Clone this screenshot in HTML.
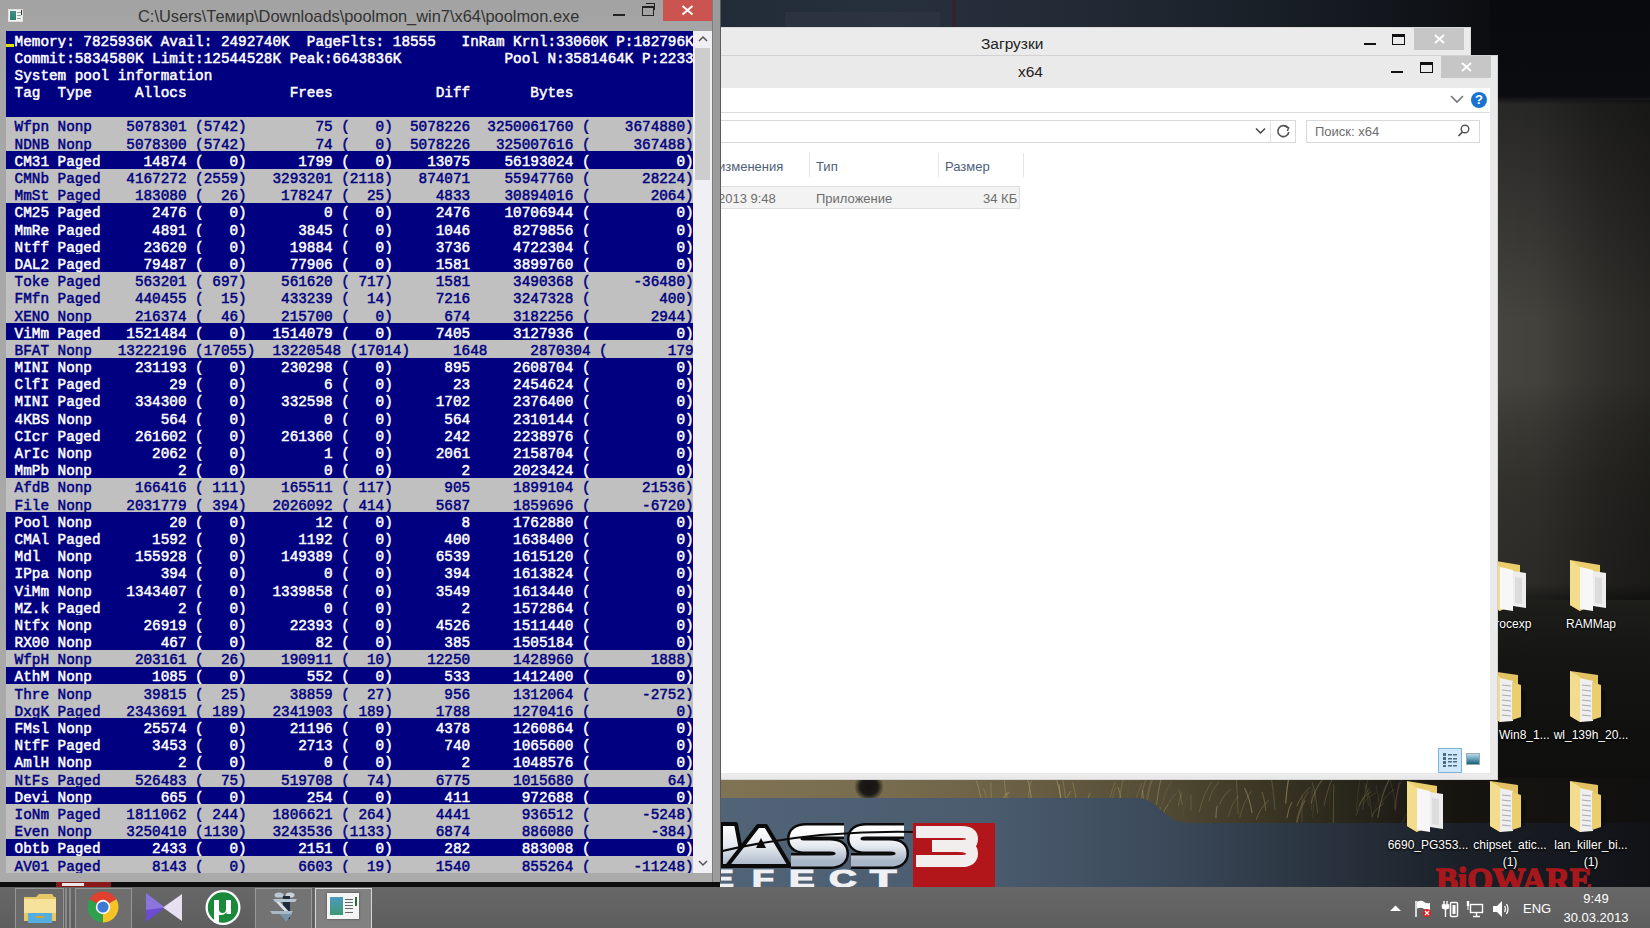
<!DOCTYPE html>
<html><head><meta charset="utf-8">
<style>
*{margin:0;padding:0;box-sizing:border-box}
html,body{width:1650px;height:928px;overflow:hidden;background:#15181c;font-family:"Liberation Sans",sans-serif}
.a{position:absolute}
.ttl{font-size:15px;color:#222;white-space:nowrap}
.r{position:absolute;left:0;width:687px;height:17.1875px;overflow:visible}
.r span{position:absolute;left:0;top:2.5px;white-space:pre;font-family:"Liberation Mono",monospace;font-weight:normal;-webkit-text-stroke:0.5px currentColor;font-size:14.5px;line-height:17px;transform:scaleX(0.9878);transform-origin:0 0}
.h,.b{background:#000080;color:#fff}
.g{background:#c0c0c0;color:#000080}
.lbl{color:#fff;font-size:12px;line-height:17px;white-space:nowrap;text-align:center;width:90px;text-shadow:0 0 2px #000,0 1px 2px #000}
</style></head><body>
<!-- ===== WALLPAPER ===== -->
<div class="a" style="left:0;top:0;width:1650px;height:928px;background:#14171b"></div>
<!-- top grunge strip -->
<div class="a" style="left:700px;top:0;width:950px;height:60px;background:linear-gradient(90deg,#222b38 0%,#26303c 20%,#222a35 40%,#1c222b 55%,#151a20 68%,#0c0e12 82%,#08090b 100%)"></div>
<div class="a" style="left:785px;top:12px;width:155px;height:16px;background:#2f3743;opacity:0.6"></div>
<div class="a" style="left:952px;top:0;width:4px;height:28px;background:#3a2024;opacity:0.7"></div>
<!-- right strip fog -->
<div class="a" style="left:1490px;top:0;width:160px;height:887px;background:linear-gradient(180deg,#090a0d 0px,#0b0c10 96px,#282826 104px,#302f2d 160px,#3c3b37 250px,#47453f 320px,#47453f 380px,#3c3b36 420px,#33322d 480px,#2f2e2a 540px,#2d2c28 584px,#1e1e1b 597px,#151513 660px,#10100f 740px,#0e0e0d 800px,#0d0d0d 887px)"></div>
<div class="a" style="left:1490px;top:100px;width:160px;height:500px;background:linear-gradient(90deg,rgba(0,0,0,0) 0%,rgba(0,0,0,0.05) 30%,rgba(0,0,0,0.3) 70%,rgba(0,0,0,0.42) 100%)"></div>
<!-- bottom band: grass -->
<div class="a" style="left:700px;top:778px;width:950px;height:50px;background:linear-gradient(90deg,#807455 0%,#786c4e 20%,#685e43 35%,#554d37 47%,#3e3926 58%,#2d2a1d 66%,#201e17 73%,#15140f 80%,#111010 100%)"></div>
<svg class="a" style="left:700px;top:770px" width="950" height="60" viewBox="0 0 950 60"><path d="M384.7 44.1 Q386.3 31.5 390.0 23.1" stroke="#9c8e60" stroke-width="1.0" fill="none" opacity="0.60"/><path d="M679.9 42.2 Q678.7 26.3 676.1 15.7" stroke="#6e6242" stroke-width="0.9" fill="none" opacity="0.32"/><path d="M658.8 36.0 Q662.6 27.3 671.2 21.5" stroke="#9c8e60" stroke-width="1.1" fill="none" opacity="0.25"/><path d="M308.2 49.7 Q307.8 33.1 306.8 22.0" stroke="#b3a470" stroke-width="0.9" fill="none" opacity="0.36"/><path d="M596.3 52.8 Q600.0 34.0 608.5 21.4" stroke="#6e6242" stroke-width="1.3" fill="none" opacity="0.51"/><path d="M339.0 39.5 Q339.9 32.9 341.9 28.4" stroke="#6e6242" stroke-width="1.1" fill="none" opacity="0.45"/><path d="M656.3 40.9 Q657.7 19.9 660.9 5.9" stroke="#6e6242" stroke-width="1.0" fill="none" opacity="0.28"/><path d="M677.8 47.7 Q681.1 25.0 688.7 9.9" stroke="#8a7c52" stroke-width="1.1" fill="none" opacity="0.37"/><path d="M423.6 44.1 Q421.9 27.8 417.9 16.9" stroke="#b3a470" stroke-width="0.8" fill="none" opacity="0.61"/><path d="M307.9 52.2 Q306.1 28.4 301.9 12.5" stroke="#6e6242" stroke-width="1.2" fill="none" opacity="0.67"/><path d="M288.9 41.1 Q287.2 27.6 283.5 18.6" stroke="#9c8e60" stroke-width="0.9" fill="none" opacity="0.59"/><path d="M538.0 44.3 Q537.4 21.7 536.1 6.7" stroke="#9c8e60" stroke-width="0.8" fill="none" opacity="0.44"/><path d="M313.9 45.6 Q312.8 39.0 310.2 34.7" stroke="#b3a470" stroke-width="0.7" fill="none" opacity="0.51"/><path d="M298.7 52.6 Q302.6 40.9 311.8 33.1" stroke="#6e6242" stroke-width="0.9" fill="none" opacity="0.71"/><path d="M662.8 40.0 Q664.8 18.4 669.7 4.0" stroke="#b3a470" stroke-width="0.9" fill="none" opacity="0.20"/><path d="M596.9 36.2 Q601.0 24.8 610.4 17.1" stroke="#b3a470" stroke-width="0.6" fill="none" opacity="0.56"/><path d="M462.7 45.1 Q464.4 38.7 468.2 34.5" stroke="#9c8e60" stroke-width="1.0" fill="none" opacity="0.60"/><path d="M426.3 39.2 Q427.9 16.7 431.7 1.7" stroke="#6e6242" stroke-width="0.6" fill="none" opacity="0.46"/><path d="M306.7 47.6 Q305.9 24.2 304.2 8.7" stroke="#b3a470" stroke-width="0.7" fill="none" opacity="0.53"/><path d="M361.5 49.7 Q360.9 28.5 359.3 14.4" stroke="#9c8e60" stroke-width="1.1" fill="none" opacity="0.66"/><path d="M291.8 44.8 Q291.5 25.6 290.7 12.7" stroke="#b3a470" stroke-width="0.8" fill="none" opacity="0.44"/><path d="M362.5 41.3 Q360.7 22.8 356.7 10.4" stroke="#b3a470" stroke-width="1.1" fill="none" opacity="0.48"/><path d="M378.8 51.1 Q376.9 27.8 372.5 12.2" stroke="#8a7c52" stroke-width="1.2" fill="none" opacity="0.65"/><path d="M478.5 35.9 Q479.6 27.7 482.1 22.2" stroke="#8a7c52" stroke-width="1.2" fill="none" opacity="0.43"/><path d="M429.6 51.5 Q431.3 44.0 435.3 39.0" stroke="#6e6242" stroke-width="0.8" fill="none" opacity="0.59"/><path d="M629.3 37.1 Q629.7 24.8 630.5 16.7" stroke="#6e6242" stroke-width="0.6" fill="none" opacity="0.26"/><path d="M461.8 35.2 Q464.9 20.6 472.2 10.9" stroke="#6e6242" stroke-width="1.0" fill="none" opacity="0.60"/><path d="M713.7 48.6 Q714.3 42.1 715.8 37.7" stroke="#b3a470" stroke-width="1.0" fill="none" opacity="0.33"/><path d="M671.5 52.4 Q675.5 31.0 684.8 16.7" stroke="#8a7c52" stroke-width="0.6" fill="none" opacity="0.20"/><path d="M677.6 48.0 Q681.1 25.4 689.3 10.3" stroke="#9c8e60" stroke-width="0.6" fill="none" opacity="0.35"/><path d="M607.9 34.5 Q609.9 23.1 614.5 15.5" stroke="#6e6242" stroke-width="0.6" fill="none" opacity="0.28"/><path d="M681.8 33.0 Q685.8 24.7 695.1 19.2" stroke="#9c8e60" stroke-width="0.8" fill="none" opacity="0.28"/><path d="M366.8 43.9 Q365.6 23.2 362.6 9.4" stroke="#8a7c52" stroke-width="1.2" fill="none" opacity="0.67"/><path d="M283.3 46.3 Q281.2 24.8 276.4 10.5" stroke="#b3a470" stroke-width="1.0" fill="none" opacity="0.46"/><path d="M508.7 31.3 Q511.7 19.5 518.7 11.6" stroke="#8a7c52" stroke-width="0.6" fill="none" opacity="0.69"/><path d="M301.9 42.6 Q304.2 36.0 309.6 31.6" stroke="#6e6242" stroke-width="0.8" fill="none" opacity="0.56"/><path d="M418.4 39.1 Q419.9 21.5 423.3 9.7" stroke="#8a7c52" stroke-width="1.3" fill="none" opacity="0.49"/><path d="M468.6 33.3 Q471.0 27.3 476.5 23.2" stroke="#8a7c52" stroke-width="0.6" fill="none" opacity="0.67"/><path d="M482.8 46.9 Q484.6 31.2 488.8 20.7" stroke="#6e6242" stroke-width="0.6" fill="none" opacity="0.37"/><path d="M556.1 49.8 Q559.9 38.1 569.0 30.3" stroke="#9c8e60" stroke-width="0.8" fill="none" opacity="0.52"/><path d="M515.8 48.1 Q516.2 40.8 517.1 35.9" stroke="#9c8e60" stroke-width="1.3" fill="none" opacity="0.52"/><path d="M444.7 53.3 Q444.0 33.1 442.4 19.6" stroke="#9c8e60" stroke-width="1.3" fill="none" opacity="0.54"/><path d="M601.9 52.1 Q602.0 36.6 602.2 26.2" stroke="#b3a470" stroke-width="1.0" fill="none" opacity="0.20"/><path d="M325.4 45.3 Q323.9 39.2 320.5 35.1" stroke="#9c8e60" stroke-width="1.0" fill="none" opacity="0.66"/><path d="M528.3 47.1 Q531.3 34.4 538.3 25.9" stroke="#9c8e60" stroke-width="0.6" fill="none" opacity="0.49"/><path d="M330.6 42.5 Q330.1 24.0 328.9 11.6" stroke="#9c8e60" stroke-width="0.6" fill="none" opacity="0.47"/><path d="M617.7 43.3 Q616.0 24.4 612.0 11.8" stroke="#9c8e60" stroke-width="1.0" fill="none" opacity="0.32"/><path d="M662.5 34.7 Q666.7 27.3 676.5 22.4" stroke="#6e6242" stroke-width="1.0" fill="none" opacity="0.30"/><path d="M611.6 40.2 Q611.8 27.6 612.3 19.2" stroke="#6e6242" stroke-width="1.3" fill="none" opacity="0.25"/><path d="M445.1 36.1 Q448.3 13.4 455.7 -1.8" stroke="#6e6242" stroke-width="1.1" fill="none" opacity="0.74"/><path d="M612.7 47.5 Q613.5 32.2 615.3 22.0" stroke="#8a7c52" stroke-width="0.7" fill="none" opacity="0.30"/><path d="M499.1 42.6 Q503.0 24.0 512.0 11.6" stroke="#8a7c52" stroke-width="0.7" fill="none" opacity="0.58"/><path d="M610.9 33.8 Q614.7 18.5 623.5 8.3" stroke="#b3a470" stroke-width="1.1" fill="none" opacity="0.35"/><path d="M656.3 45.5 Q660.4 29.0 670.0 17.9" stroke="#b3a470" stroke-width="0.6" fill="none" opacity="0.35"/><path d="M491.0 40.0 Q491.0 30.9 490.9 24.8" stroke="#8a7c52" stroke-width="0.9" fill="none" opacity="0.48"/><path d="M586.9 48.2 Q588.4 38.5 591.7 32.1" stroke="#9c8e60" stroke-width="0.9" fill="none" opacity="0.71"/><path d="M597.1 52.3 Q599.6 39.1 605.3 30.3" stroke="#6e6242" stroke-width="1.2" fill="none" opacity="0.73"/><path d="M672.0 46.9 Q670.1 26.9 665.6 13.5" stroke="#b3a470" stroke-width="0.8" fill="none" opacity="0.22"/><path d="M363.4 36.7 Q365.7 27.4 370.9 21.1" stroke="#b3a470" stroke-width="0.7" fill="none" opacity="0.69"/><path d="M299.8 34.8 Q302.7 27.1 309.4 22.0" stroke="#b3a470" stroke-width="1.2" fill="none" opacity="0.40"/><path d="M408.4 39.3 Q410.4 22.8 415.2 11.9" stroke="#b3a470" stroke-width="0.8" fill="none" opacity="0.35"/><path d="M447.1 32.0 Q449.6 14.4 455.4 2.7" stroke="#8a7c52" stroke-width="1.0" fill="none" opacity="0.55"/><path d="M332.4 37.1 Q330.8 19.2 326.9 7.2" stroke="#b3a470" stroke-width="0.7" fill="none" opacity="0.70"/><path d="M694.2 39.7 Q696.8 19.8 702.8 6.6" stroke="#b3a470" stroke-width="0.7" fill="none" opacity="0.23"/><path d="M695.6 38.8 Q696.6 22.6 699.1 11.8" stroke="#b3a470" stroke-width="0.6" fill="none" opacity="0.31"/><path d="M409.5 48.9 Q411.4 29.6 415.8 16.7" stroke="#8a7c52" stroke-width="0.7" fill="none" opacity="0.64"/><path d="M671.6 47.0 Q675.3 38.8 684.1 33.3" stroke="#b3a470" stroke-width="1.1" fill="none" opacity="0.20"/><path d="M565.8 40.9 Q564.7 29.5 561.9 21.9" stroke="#8a7c52" stroke-width="1.1" fill="none" opacity="0.54"/><path d="M327.3 34.7 Q328.7 18.7 331.9 8.1" stroke="#9c8e60" stroke-width="0.8" fill="none" opacity="0.51"/><path d="M448.7 52.7 Q449.6 45.9 451.8 41.4" stroke="#b3a470" stroke-width="1.2" fill="none" opacity="0.45"/><path d="M695.8 41.7 Q693.9 21.1 689.3 7.4" stroke="#9c8e60" stroke-width="0.7" fill="none" opacity="0.27"/><path d="M539.7 47.7 Q543.3 31.6 551.7 20.8" stroke="#8a7c52" stroke-width="1.0" fill="none" opacity="0.39"/><path d="M574.9 40.2 Q573.3 16.5 569.7 0.7" stroke="#6e6242" stroke-width="1.2" fill="none" opacity="0.59"/><path d="M519.7 34.4 Q523.0 25.2 530.8 19.1" stroke="#b3a470" stroke-width="0.6" fill="none" opacity="0.50"/><path d="M633.4 53.2 Q633.5 30.1 633.8 14.7" stroke="#b3a470" stroke-width="1.0" fill="none" opacity="0.29"/><path d="M709.9 47.9 Q713.1 36.5 720.8 28.9" stroke="#8a7c52" stroke-width="1.1" fill="none" opacity="0.27"/><path d="M281.0 50.0 Q281.9 32.1 283.9 20.2" stroke="#6e6242" stroke-width="0.7" fill="none" opacity="0.56"/><path d="M624.1 35.5 Q627.9 14.9 636.5 1.1" stroke="#9c8e60" stroke-width="1.0" fill="none" opacity="0.36"/><path d="M702.0 53.2 Q704.8 44.8 711.4 39.1" stroke="#9c8e60" stroke-width="0.6" fill="none" opacity="0.30"/><path d="M552.1 43.2 Q549.8 28.2 544.5 18.2" stroke="#b3a470" stroke-width="1.2" fill="none" opacity="0.49"/><path d="M585.7 33.5 Q587.2 12.0 590.9 -2.3" stroke="#9c8e60" stroke-width="1.1" fill="none" opacity="0.72"/><path d="M431.2 51.0 Q434.5 28.2 442.1 13.0" stroke="#8a7c52" stroke-width="0.9" fill="none" opacity="0.52"/><path d="M328.0 31.1 Q326.9 23.7 324.4 18.8" stroke="#6e6242" stroke-width="0.9" fill="none" opacity="0.41"/><path d="M309.9 52.1 Q310.7 42.4 312.7 35.9" stroke="#6e6242" stroke-width="1.1" fill="none" opacity="0.36"/><path d="M456.6 34.7 Q459.0 12.5 464.5 -2.3" stroke="#b3a470" stroke-width="0.9" fill="none" opacity="0.50"/><path d="M439.1 40.4 Q442.0 17.0 448.8 1.4" stroke="#b3a470" stroke-width="0.7" fill="none" opacity="0.45"/><path d="M482.4 35.1 Q481.1 25.3 478.2 18.8" stroke="#8a7c52" stroke-width="1.0" fill="none" opacity="0.51"/><path d="M341.3 45.8 Q340.1 31.9 337.3 22.5" stroke="#6e6242" stroke-width="0.9" fill="none" opacity="0.69"/><path d="M459.4 48.3 Q459.7 41.4 460.3 36.8" stroke="#9c8e60" stroke-width="1.2" fill="none" opacity="0.51"/><path d="M668.6 36.3 Q667.4 23.3 664.7 14.6" stroke="#9c8e60" stroke-width="0.8" fill="none" opacity="0.24"/></svg>
<div class="a" style="left:855px;top:778px;width:28px;height:22px;background:radial-gradient(ellipse at 50% 40%,#141311 0%,#1c1b17 45%,rgba(40,38,30,0) 75%)"></div>
<!-- blue-gray panel -->
<svg class="a" style="left:700px;top:770px" width="950" height="117" viewBox="0 0 950 117">
  <defs><linearGradient id="pg" x1="0" x2="1" y1="0" y2="0">
    <stop offset="0" stop-color="#526477"/><stop offset="0.3" stop-color="#4b5c6f"/><stop offset="0.5" stop-color="#3a4858"/><stop offset="0.65" stop-color="#2a3440"/><stop offset="0.8" stop-color="#1b2028"/><stop offset="1" stop-color="#101216"/></linearGradient></defs>
  <path d="M0 28 L438 28 Q448 28 456 36 L474 50 Q482 53 492 53 L950 53 L950 117 L0 117 Z" fill="url(#pg)"/>
</svg>
<!-- Mass Effect logo -->
<svg class="a" style="left:700px;top:770px" width="300" height="117" viewBox="0 0 300 117">
  <defs><linearGradient id="sil" x1="0" x2="0" y1="0" y2="1"><stop offset="0" stop-color="#ffffff"/><stop offset="0.5" stop-color="#e6eaf0"/><stop offset="1" stop-color="#a9b6c8"/></linearGradient></defs>
  <g stroke="#0b0b0b" stroke-width="4" stroke-linejoin="round">
    <polygon points="21,54 36,54 44,96 21,96" fill="url(#sil)"/>
    <polygon points="27,96 58,56 66,56 90,96" fill="url(#sil)"/>
  </g>
  <g fill="none" stroke-linecap="butt">
    <path d="M144 61 L106 61 Q95 61 95 69 Q95 76 106 76 L130 76 Q141 76 141 83.5 Q141 91 130 91 L91 91" stroke="#0b0b0b" stroke-width="16"/>
    <path d="M204 61 L166 61 Q155 61 155 69 Q155 76 166 76 L190 76 Q201 76 201 83.5 Q201 91 190 91 L151 91" stroke="#0b0b0b" stroke-width="16"/>
    <path d="M144 61 L106 61 Q95 61 95 69 Q95 76 106 76 L130 76 Q141 76 141 83.5 Q141 91 130 91 L91 91" stroke="url(#sil)" stroke-width="11"/>
    <path d="M204 61 L166 61 Q155 61 155 69 Q155 76 166 76 L190 76 Q201 76 201 83.5 Q201 91 190 91 L151 91" stroke="url(#sil)" stroke-width="11"/>
  </g>
  <path d="M18 82 Q110 60 215 62" stroke="#0b0b0b" stroke-width="2" fill="none"/>
  <polygon points="61,68 66,78 56,78" fill="#0b0b0b"/>
  <rect x="213" y="53" width="82" height="64" fill="#b3161a"/>
  <path d="M216 62 L262 62 Q272 62 272 69 Q272 76 262 76 L232 76 M258 76 Q272 76 272 83.5 Q272 91 262 91 L216 91" stroke="#f2eeee" stroke-width="12" fill="none"/>
  <g fill="#eef0f4" stroke="#eef0f4" stroke-width="1.2" font-family="Liberation Sans" font-weight="bold" font-size="24">
    <text transform="translate(9,117) scale(1.55,1)">E</text>
    <text transform="translate(52,117) scale(1.5,1)">F</text>
    <text transform="translate(89,117) scale(1.6,1)">E</text>
    <text transform="translate(129,117) scale(1.6,1)">C</text>
    <text transform="translate(170,117) scale(1.8,1)">T</text>
  </g>
</svg>
<!-- BioWare -->
<div class="a" style="left:1436px;top:862px;width:165px;height:25px;overflow:hidden">
  <div style="position:absolute;left:0;top:1px;font:bold 34px/34px 'Liberation Serif',serif;color:#a8171b;-webkit-text-stroke:1.6px #a8171b;white-space:nowrap;transform:scaleX(0.97);transform-origin:0 0">BiOWARE</div>
</div>

<!-- ===== DESKTOP ICONS ===== -->
<svg class="a" style="left:0;top:0" width="0" height="0"><defs>
<g id="fold">
  <polygon points="2,1 32,6 32,42 12,52 2,46" fill="#eccd6e"/>
  <polygon points="2,1 12,8 12,52 2,46" fill="#f3dc8c"/>
  <polygon points="12,8 25,11 25,52 12,50" fill="#f7f7f7"/>
  <polygon points="25,12 38,14 38,49 25,47" fill="#ededed"/>
  <polygon points="27,18 34,19 34,45 27,44" fill="#dcdcdc"/>
</g>
<g id="fold2">
  <polygon points="2,1 30,5 30,44 12,52 2,46" fill="#e3c263"/>
  <polygon points="2,1 12,7 12,52 2,46" fill="#f4dc8e"/>
  <polygon points="12,8 25,11 25,51 12,52" fill="#efefef"/>
  <path d="M14 15 L23 16 M14 20 L23 21 M14 25 L23 26 M14 30 L23 31 M14 35 L23 36 M14 40 L23 41 M14 45 L23 46" stroke="#a9a9a9" stroke-width="1.2"/>
  <polygon points="24,12 33,15 33,47 24,50" fill="#ecce70"/>
  <polygon points="33,18 38,22 37,46 33,47" fill="#000" opacity="0.25"/>
</g></defs></svg>
<svg class="a" style="left:1568px;top:559px" width="40" height="53"><use href="#fold"/></svg>
<svg class="a" style="left:1568px;top:670px" width="40" height="53"><use href="#fold2"/></svg>
<svg class="a" style="left:1568px;top:780px" width="40" height="53"><use href="#fold2"/></svg>
<svg class="a" style="left:1488px;top:559px" width="40" height="53"><use href="#fold"/></svg>
<svg class="a" style="left:1488px;top:670px" width="40" height="53"><use href="#fold2"/></svg>
<svg class="a" style="left:1488px;top:780px" width="40" height="53"><use href="#fold2"/></svg>
<svg class="a" style="left:1405px;top:780px" width="40" height="53"><use href="#fold"/></svg>
<div class="a lbl" style="left:1546px;top:616px">RAMMap</div>
<div class="a lbl" style="left:1546px;top:727px">wl_139h_20...</div>
<div class="a lbl" style="left:1546px;top:837px">lan_killer_bi...<br>(1)</div>
<div class="a lbl" style="left:1465px;top:616px">procexp</div>
<div class="a lbl" style="left:1499px;top:727px;text-align:left">Win8_1...</div>
<div class="a lbl" style="left:1465px;top:837px">chipset_atic...<br>(1)</div>
<div class="a lbl" style="left:1383px;top:837px">6690_PG353...</div>


<!-- ===== ZAGRUZKI WINDOW ===== -->
<div class="a" style="left:700px;top:27px;width:771px;height:40px;background:#ebebeb;border:1px solid #d9d9d9"></div>
<div class="a ttl" style="left:981px;top:35px;font-size:15.5px">Загрузки</div>
<div class="a" style="left:1364px;top:43px;width:12px;height:2px;background:#111"></div>
<div class="a" style="left:1392px;top:34px;width:13px;height:11px;border:1px solid #111;border-top-width:3px"></div>
<div class="a" style="left:1414px;top:28px;width:50px;height:22px;background:#c6c6c6"></div>
<svg class="a" style="left:1434px;top:34px" width="11" height="10"><path d="M1 1 L10 9 M10 1 L1 9" stroke="#fff" stroke-width="1.9"/></svg>

<!-- ===== X64 WINDOW ===== -->
<div class="a" style="left:700px;top:55px;width:798px;height:725px;background:#eaeaea;border:1px solid #d2d2d2"></div>
<div class="a" style="left:700px;top:88px;width:790px;height:685px;background:#fff"></div>
<div class="a ttl" style="left:1018px;top:63px;font-size:15.5px">x64</div>
<div class="a" style="left:1391px;top:71px;width:12px;height:2px;background:#111"></div>
<div class="a" style="left:1420px;top:62px;width:13px;height:11px;border:1px solid #111;border-top-width:3px"></div>
<div class="a" style="left:1441px;top:56px;width:50px;height:22px;background:#c6c6c6"></div>
<svg class="a" style="left:1461px;top:62px" width="11" height="10"><path d="M1 1 L10 9 M10 1 L1 9" stroke="#fff" stroke-width="1.9"/></svg>
<!-- ribbon -->
<div class="a" style="left:700px;top:112px;width:790px;height:1px;background:#dadbdc"></div>
<svg class="a" style="left:1450px;top:95px" width="14" height="9"><path d="M1 1 L7 7 L13 1" stroke="#777" stroke-width="1.6" fill="none"/></svg>
<div class="a" style="left:1471px;top:92px;width:16px;height:16px;border-radius:50%;background:#1a73d0;color:#fff;font:bold 13px/16px 'Liberation Sans',sans-serif;text-align:center">?</div>
<!-- address bar -->
<div class="a" style="left:700px;top:120px;width:596px;height:23px;border:1px solid #d9d9d9;background:#fff"></div>
<div class="a" style="left:1270px;top:121px;width:1px;height:21px;background:#e0e0e0"></div>
<svg class="a" style="left:1255px;top:127px" width="11" height="8"><path d="M1 1.5 L5.5 6 L10 1.5" stroke="#444" stroke-width="1.5" fill="none"/></svg>
<svg class="a" style="left:1275px;top:123px" width="17" height="17"><path d="M12.5 4.5 A5.5 5.5 0 1 0 13.8 9" stroke="#555" stroke-width="1.6" fill="none"/><path d="M10 2.5 L13.6 4.8 L12.4 8" stroke="#555" stroke-width="1.5" fill="none"/></svg>
<div class="a" style="left:1306px;top:120px;width:174px;height:23px;border:1px solid #d9d9d9;background:#fff"></div>
<div class="a" style="left:1315px;top:124px;font-size:13px;color:#6d6d6d;white-space:nowrap">Поиск: x64</div>
<svg class="a" style="left:1457px;top:124px" width="13" height="14"><circle cx="8" cy="5" r="3.8" stroke="#555" stroke-width="1.4" fill="none"/><path d="M5.5 7.8 L1.5 12" stroke="#555" stroke-width="1.8"/></svg>
<!-- column headers -->
<div class="a" style="left:718px;top:159px;font-size:13px;color:#4c607a;white-space:nowrap">изменения</div>
<div class="a" style="left:809px;top:153px;width:1px;height:24px;background:#e5e5e5"></div>
<div class="a" style="left:816px;top:159px;font-size:13px;color:#4c607a">Тип</div>
<div class="a" style="left:938px;top:153px;width:1px;height:24px;background:#e5e5e5"></div>
<div class="a" style="left:945px;top:159px;font-size:13px;color:#4c607a">Размер</div>
<div class="a" style="left:1023px;top:153px;width:1px;height:24px;background:#e5e5e5"></div>
<!-- file row -->
<div class="a" style="left:700px;top:186px;width:320px;height:23px;background:#f3f3f3;border:1px solid #dedede"></div>
<div class="a" style="left:718px;top:191px;font-size:13px;color:#6d6d6d;white-space:nowrap">2013 9:48</div>
<div class="a" style="left:816px;top:191px;font-size:13px;color:#6d6d6d">Приложение</div>
<div class="a" style="left:983px;top:191px;font-size:13px;color:#6d6d6d">34 КБ</div>
<!-- view buttons -->
<div class="a" style="left:1438px;top:748px;width:24px;height:25px;background:#cfe8fb;border:1px solid #7db3d9"></div>
<svg class="a" style="left:1440px;top:751px" width="20" height="18"><g fill="#4b6a80"><rect x="3" y="2" width="3" height="3"/><rect x="3" y="6" width="3" height="3"/><rect x="3" y="10" width="3" height="3"/><rect x="3" y="14" width="3" height="2"/><rect x="8" y="3" width="4" height="1.5"/><rect x="13" y="3" width="4" height="1.5"/><rect x="8" y="7" width="4" height="1.5"/><rect x="13" y="7" width="4" height="1.5"/><rect x="8" y="10" width="4" height="1.5"/><rect x="13" y="10" width="4" height="1.5"/><rect x="8" y="14" width="4" height="1.5"/><rect x="13" y="14" width="4" height="1.5"/></g></svg>
<div class="a" style="left:1466px;top:753px;width:14px;height:12px;background:linear-gradient(180deg,#b8d8e8 0%,#6aa6c0 45%,#1e5d77 100%);border:1px solid #9aa"></div>

<!-- ===== CONSOLE ===== -->
<div class="a" style="left:0;top:0;width:721px;height:882px;background:linear-gradient(180deg,#a2a2a2 0px,#a6a6a6 31px,#aaaaaa 100%)"></div>
<div class="a" style="left:712px;top:0;width:9px;height:882px;background:#9c9c9c;border-left:1px solid #7c7c7c;border-right:1px solid #5a5a5a"></div>
<div class="a" style="left:663px;top:0;width:49px;height:21px;background:#cc5450"></div>
<svg class="a" style="left:681px;top:5px" width="13" height="11"><path d="M1.5 1 L11.5 9.5 M11.5 1 L1.5 9.5" stroke="#fff" stroke-width="2"/></svg>
<div class="a" style="left:613px;top:14px;width:12px;height:2px;background:#222"></div>
<div class="a" style="left:642px;top:6px;width:12px;height:10px;border:1.5px solid #222;border-top-width:2px"></div>
<div class="a" style="left:646px;top:3px;width:9px;height:2px;border-top:1.5px solid #222;border-right:1.5px solid #222;height:7px"></div>
<div class="a" style="left:8px;top:9px;width:15px;height:13px;background:#f5f5f0;border:1px solid #e0e0e0"></div>
<div class="a" style="left:10px;top:11px;width:6px;height:9px;background:linear-gradient(180deg,#3f8f86,#2f7f6a)"></div>
<div class="a" style="left:17px;top:12px;width:4px;height:1px;background:#999"></div>
<div class="a" style="left:17px;top:15px;width:4px;height:1px;background:#999"></div>
<div class="a" style="left:17px;top:18px;width:4px;height:1px;background:#999"></div>
<div class="a" style="left:21px;top:10px;width:1px;height:5px;background:#333"></div>
<div class="a ttl" style="left:138px;top:7px;font-size:16.4px;color:#333">C:\Users\Темир\Downloads\poolmon_win7\x64\poolmon.exe</div>
<div class="a" style="left:6px;top:31px;width:687px;height:842px;background:#000080;overflow:hidden">
<div class="r h" style="top:0.00px"><span> Memory: 7825936K Avail: 2492740K  PageFlts: 18555   InRam Krnl:33060K P:182796K</span></div>
<div class="r h" style="top:17.19px"><span> Commit:5834580K Limit:12544528K Peak:6643836K            Pool N:3581464K P:2233</span></div>
<div class="r h" style="top:34.38px"><span> System pool information</span></div>
<div class="r h" style="top:51.56px"><span> Tag  Type     Allocs            Frees            Diff       Bytes</span></div>
<div class="r h" style="top:68.75px"><span></span></div>
<div class="r g" style="top:85.94px"><span> Wfpn Nonp    5078301 (5742)        75 (   0)  5078226  3250061760 (    3674880)</span></div>
<div class="r g" style="top:103.12px"><span> NDNB Nonp    5078300 (5742)        74 (   0)  5078226   325007616 (     367488)</span></div>
<div class="r b" style="top:120.31px"><span> CM31 Paged     14874 (   0)      1799 (   0)    13075    56193024 (          0)</span></div>
<div class="r g" style="top:137.50px"><span> CMNb Paged   4167272 (2559)   3293201 (2118)   874071    55947760 (      28224)</span></div>
<div class="r g" style="top:154.69px"><span> MmSt Paged    183080 (  26)    178247 (  25)     4833    30894016 (       2064)</span></div>
<div class="r b" style="top:171.88px"><span> CM25 Paged      2476 (   0)         0 (   0)     2476    10706944 (          0)</span></div>
<div class="r b" style="top:189.06px"><span> MmRe Paged      4891 (   0)      3845 (   0)     1046     8279856 (          0)</span></div>
<div class="r b" style="top:206.25px"><span> Ntff Paged     23620 (   0)     19884 (   0)     3736     4722304 (          0)</span></div>
<div class="r b" style="top:223.44px"><span> DAL2 Paged     79487 (   0)     77906 (   0)     1581     3899760 (          0)</span></div>
<div class="r g" style="top:240.62px"><span> Toke Paged    563201 ( 697)    561620 ( 717)     1581     3490368 (     -36480)</span></div>
<div class="r g" style="top:257.81px"><span> FMfn Paged    440455 (  15)    433239 (  14)     7216     3247328 (        400)</span></div>
<div class="r g" style="top:275.00px"><span> XENO Nonp     216374 (  46)    215700 (   0)      674     3182256 (       2944)</span></div>
<div class="r b" style="top:292.19px"><span> ViMm Paged   1521484 (   0)   1514079 (   0)     7405     3127936 (          0)</span></div>
<div class="r g" style="top:309.38px"><span> BFAT Nonp   13222196 (17055)  13220548 (17014)     1648     2870304 (       179</span></div>
<div class="r b" style="top:326.56px"><span> MINI Nonp     231193 (   0)    230298 (   0)      895     2608704 (          0)</span></div>
<div class="r b" style="top:343.75px"><span> ClfI Paged        29 (   0)         6 (   0)       23     2454624 (          0)</span></div>
<div class="r b" style="top:360.94px"><span> MINI Paged    334300 (   0)    332598 (   0)     1702     2376400 (          0)</span></div>
<div class="r b" style="top:378.12px"><span> 4KBS Nonp        564 (   0)         0 (   0)      564     2310144 (          0)</span></div>
<div class="r b" style="top:395.31px"><span> CIcr Paged    261602 (   0)    261360 (   0)      242     2238976 (          0)</span></div>
<div class="r b" style="top:412.50px"><span> ArIc Nonp       2062 (   0)         1 (   0)     2061     2158704 (          0)</span></div>
<div class="r b" style="top:429.69px"><span> MmPb Nonp          2 (   0)         0 (   0)        2     2023424 (          0)</span></div>
<div class="r g" style="top:446.88px"><span> AfdB Nonp     166416 ( 111)    165511 ( 117)      905     1899104 (      21536)</span></div>
<div class="r g" style="top:464.06px"><span> File Nonp    2031779 ( 394)   2026092 ( 414)     5687     1859696 (      -6720)</span></div>
<div class="r b" style="top:481.25px"><span> Pool Nonp         20 (   0)        12 (   0)        8     1762880 (          0)</span></div>
<div class="r b" style="top:498.44px"><span> CMAl Paged      1592 (   0)      1192 (   0)      400     1638400 (          0)</span></div>
<div class="r b" style="top:515.62px"><span> Mdl  Nonp     155928 (   0)    149389 (   0)     6539     1615120 (          0)</span></div>
<div class="r b" style="top:532.81px"><span> IPpa Nonp        394 (   0)         0 (   0)      394     1613824 (          0)</span></div>
<div class="r b" style="top:550.00px"><span> ViMm Nonp    1343407 (   0)   1339858 (   0)     3549     1613440 (          0)</span></div>
<div class="r b" style="top:567.19px"><span> MZ.k Paged         2 (   0)         0 (   0)        2     1572864 (          0)</span></div>
<div class="r b" style="top:584.38px"><span> Ntfx Nonp      26919 (   0)     22393 (   0)     4526     1511440 (          0)</span></div>
<div class="r b" style="top:601.56px"><span> RX00 Nonp        467 (   0)        82 (   0)      385     1505184 (          0)</span></div>
<div class="r g" style="top:618.75px"><span> WfpH Nonp     203161 (  26)    190911 (  10)    12250     1428960 (       1888)</span></div>
<div class="r b" style="top:635.94px"><span> AthM Nonp       1085 (   0)       552 (   0)      533     1412400 (          0)</span></div>
<div class="r g" style="top:653.12px"><span> Thre Nonp      39815 (  25)     38859 (  27)      956     1312064 (      -2752)</span></div>
<div class="r g" style="top:670.31px"><span> DxgK Paged   2343691 ( 189)   2341903 ( 189)     1788     1270416 (          0)</span></div>
<div class="r b" style="top:687.50px"><span> FMsl Nonp      25574 (   0)     21196 (   0)     4378     1260864 (          0)</span></div>
<div class="r b" style="top:704.69px"><span> NtfF Paged      3453 (   0)      2713 (   0)      740     1065600 (          0)</span></div>
<div class="r b" style="top:721.88px"><span> AmlH Nonp          2 (   0)         0 (   0)        2     1048576 (          0)</span></div>
<div class="r g" style="top:739.06px"><span> NtFs Paged    526483 (  75)    519708 (  74)     6775     1015680 (         64)</span></div>
<div class="r b" style="top:756.25px"><span> Devi Nonp        665 (   0)       254 (   0)      411      972688 (          0)</span></div>
<div class="r g" style="top:773.44px"><span> IoNm Paged   1811062 ( 244)   1806621 ( 264)     4441      936512 (      -5248)</span></div>
<div class="r g" style="top:790.62px"><span> Even Nonp    3250410 (1130)   3243536 (1133)     6874      886080 (       -384)</span></div>
<div class="r b" style="top:807.81px"><span> Obtb Paged      2433 (   0)      2151 (   0)      282      883008 (          0)</span></div>
<div class="r g" style="top:825.00px"><span> AV01 Paged      8143 (   0)      6603 (  19)     1540      855264 (     -11248)</span></div>
</div>
<div class="a" style="left:6px;top:44px;width:8px;height:3px;background:#e0e000"></div>
<!-- scrollbar -->
<div class="a" style="left:693px;top:31px;width:19px;height:842px;background:#f0f0f4"></div>
<div class="a" style="left:695px;top:48px;width:15px;height:132px;background:#cdcdcd"></div>
<svg class="a" style="left:698px;top:35px" width="10" height="7"><path d="M1 6 L5 2 L9 6" stroke="#555" stroke-width="1.5" fill="none"/></svg>
<svg class="a" style="left:698px;top:860px" width="10" height="7"><path d="M1 1 L5 5 L9 1" stroke="#555" stroke-width="1.5" fill="none"/></svg>
<!-- black strip under console -->
<div class="a" style="left:0;top:882px;width:720px;height:5px;background:#0c0c0c"></div>
<div class="a" style="left:56px;top:882px;width:55px;height:5px;background:#8a1a1a"></div>
<div class="a" style="left:62px;top:883px;width:22px;height:3px;background:#e8e8e8"></div>

<!-- ===== TASKBAR ===== -->
<div class="a" style="left:0;top:887px;width:1650px;height:41px;background:linear-gradient(180deg,#676767,#5e5e5e)"></div>
<!-- buttons -->
<div class="a" style="left:15px;top:888px;width:49px;height:40px;background:#6a6a6a;border:1px solid #969696;border-bottom:none"></div>
<div class="a" style="left:65px;top:888px;width:2px;height:40px;background:#8a8a8a"></div>
<div class="a" style="left:69px;top:888px;width:2px;height:40px;background:#8a8a8a"></div>
<div class="a" style="left:75px;top:888px;width:57px;height:40px;background:#6e6e6e;border:1px solid #969696;border-bottom:none"></div>
<div class="a" style="left:255px;top:888px;width:57px;height:40px;background:#737373;border:1px solid #999;border-bottom:none"></div>
<div class="a" style="left:315px;top:888px;width:57px;height:40px;background:#818181;border:1px solid #d8d8d8;border-bottom:none"></div>
<!-- explorer icon -->
<svg class="a" style="left:22px;top:891px" width="36" height="34">
  <path d="M2 6 L14 6 L17 3 L30 3 L32 6 L34 6 L34 30 L2 30 Z" fill="#e7c868"/>
  <rect x="2" y="8" width="32" height="14" fill="#f6e29a"/>
  <rect x="6" y="22" width="24" height="10" fill="#54aee0"/>
  <rect x="14" y="25" width="8" height="2" fill="#e0a030"/>
</svg>
<!-- chrome -->
<svg class="a" style="left:87px;top:891px" width="32" height="32" viewBox="-16 -16 32 32">
  <path d="M0 0 L-13.42 -7.75 A15.5 15.5 0 0 1 13.42 -7.75 Z" fill="#e0402f"/>
  <path d="M0 0 L13.42 -7.75 A15.5 15.5 0 0 1 0 15.5 Z" fill="#f5c324"/>
  <path d="M0 0 L0 15.5 A15.5 15.5 0 0 1 -13.42 -7.75 Z" fill="#2fa14c"/>
  <circle r="7.2" fill="#fff"/>
  <circle r="5.6" fill="#3b7bd4"/>
</svg>
<!-- potplayer -->
<svg class="a" style="left:145px;top:892px" width="38" height="31">
  <path d="M1 1 L20 15.5 L1 30 Z" fill="#6b4bd0"/>
  <path d="M37 2 L18 15.5 L37 29 Z" fill="#e6e0f2"/>
  <path d="M1 1 L20 15.5 L1 18 Z" fill="#9a86e4" opacity="0.7"/>
</svg>
<!-- utorrent -->
<svg class="a" style="left:205px;top:890px" width="36" height="35" viewBox="0 0 36 35">
  <circle cx="18" cy="17.5" r="17.5" fill="#fff"/>
  <circle cx="18" cy="17.5" r="15.2" fill="#1a8a3a"/>
  <path d="M9 10 L14 10 L14 19 Q14 23 17.5 23 Q21 23 21 19 L21 10 L26 10 L26 24 L21.5 24 L21.5 22 Q19.5 25 16 25 L14 25 L14 33 L9 33 Z" fill="#fff"/>
</svg>
<!-- sc2 -->
<svg class="a" style="left:268px;top:891px" width="32" height="32">
  <ellipse cx="11" cy="4" rx="4.5" ry="2.6" fill="#b9c8d4"/>
  <ellipse cx="22" cy="4" rx="4.5" ry="2.6" fill="#c9d5dc"/>
  <rect x="15" y="5" width="7" height="23" fill="#1d2b3a"/>
  <path d="M5 8 L29 8 L27 11 L7 11 Z" fill="#b4c4d0"/>
  <path d="M8 11 L12 11 L24 24 L20 24 Z" fill="#d8e2ea"/>
  <path d="M2 20 L25 20 L23 23 L4 23 Z" fill="#a8b8c6"/>
  <path d="M12 23 L24 23 L18 31 Z" fill="#7a92a6"/>
</svg>
<!-- console thumb -->
<div class="a" style="left:327px;top:893px;width:32px;height:26px;background:#f4f4f4;box-shadow:0 0 2px #444"></div>
<div class="a" style="left:330px;top:897px;width:13px;height:18px;background:linear-gradient(180deg,#4c9ac0,#3c9a70)"></div>
<div class="a" style="left:345px;top:899px;width:8px;height:1px;background:#666"></div>
<div class="a" style="left:345px;top:902px;width:8px;height:1px;background:#666"></div>
<div class="a" style="left:345px;top:905px;width:8px;height:1px;background:#666"></div>
<div class="a" style="left:345px;top:908px;width:8px;height:1px;background:#666"></div>
<div class="a" style="left:345px;top:912px;width:8px;height:1px;background:#666"></div>
<div class="a" style="left:355px;top:897px;width:2px;height:9px;background:#2a6a3a"></div>
<!-- tray -->
<svg class="a" style="left:1390px;top:905px" width="11" height="7"><path d="M0 6 L5.5 0.5 L11 6 Z" fill="#fff"/></svg>
<svg class="a" style="left:1414px;top:900px" width="20" height="18">
  <path d="M2 1 L2 17" stroke="#fff" stroke-width="1.5"/>
  <path d="M3 1.5 Q8 0 10 2 Q13 4 16 3 L16 10 Q13 11 10 9 Q8 7 3 8.5 Z" fill="#fff"/>
  <circle cx="13" cy="13" r="4" fill="#e02020"/>
  <path d="M11 11 L15 15 M15 11 L11 15" stroke="#fff" stroke-width="1.2"/>
</svg>
<svg class="a" style="left:1441px;top:900px" width="18" height="18">
  <path d="M3 1 L3 5 M6 1 L6 5 M1.5 5 L7.5 5 L7.5 8 Q4.5 10 1.5 8 Z M4.5 9 L4.5 17" stroke="#fff" stroke-width="1.4" fill="#fff"/>
  <rect x="9.5" y="2.5" width="7" height="14" rx="1" fill="none" stroke="#fff" stroke-width="1.5"/>
  <rect x="11.5" y="5" width="3" height="9" fill="#fff"/>
</svg>
<svg class="a" style="left:1466px;top:900px" width="18" height="18">
  <path d="M2 1 L2 6" stroke="#fff" stroke-width="2.4"/>
  <path d="M2 6 L2 10" stroke="#fff" stroke-width="1"/>
  <rect x="4.5" y="4.5" width="12" height="8" fill="none" stroke="#fff" stroke-width="1.4"/>
  <path d="M10.5 13 L10.5 16 M7 16.5 L14 16.5" stroke="#fff" stroke-width="1.4"/>
</svg>
<svg class="a" style="left:1492px;top:900px" width="18" height="18">
  <path d="M1 6 L5 6 L10 1 L10 17 L5 12 L1 12 Z" fill="#fff"/>
  <path d="M12.5 6 Q14.5 9 12.5 12 M14.5 4 Q17.5 9 14.5 14" stroke="#fff" stroke-width="1.3" fill="none"/>
</svg>
<div class="a" style="left:1523px;top:901px;font-size:13px;color:#fff">ENG</div>
<div class="a" style="left:1566px;top:891px;width:60px;text-align:center;font-size:13px;color:#fff">9:49</div>
<div class="a" style="left:1562px;top:910px;width:68px;text-align:center;font-size:13px;color:#fff">30.03.2013</div>

</body></html>
